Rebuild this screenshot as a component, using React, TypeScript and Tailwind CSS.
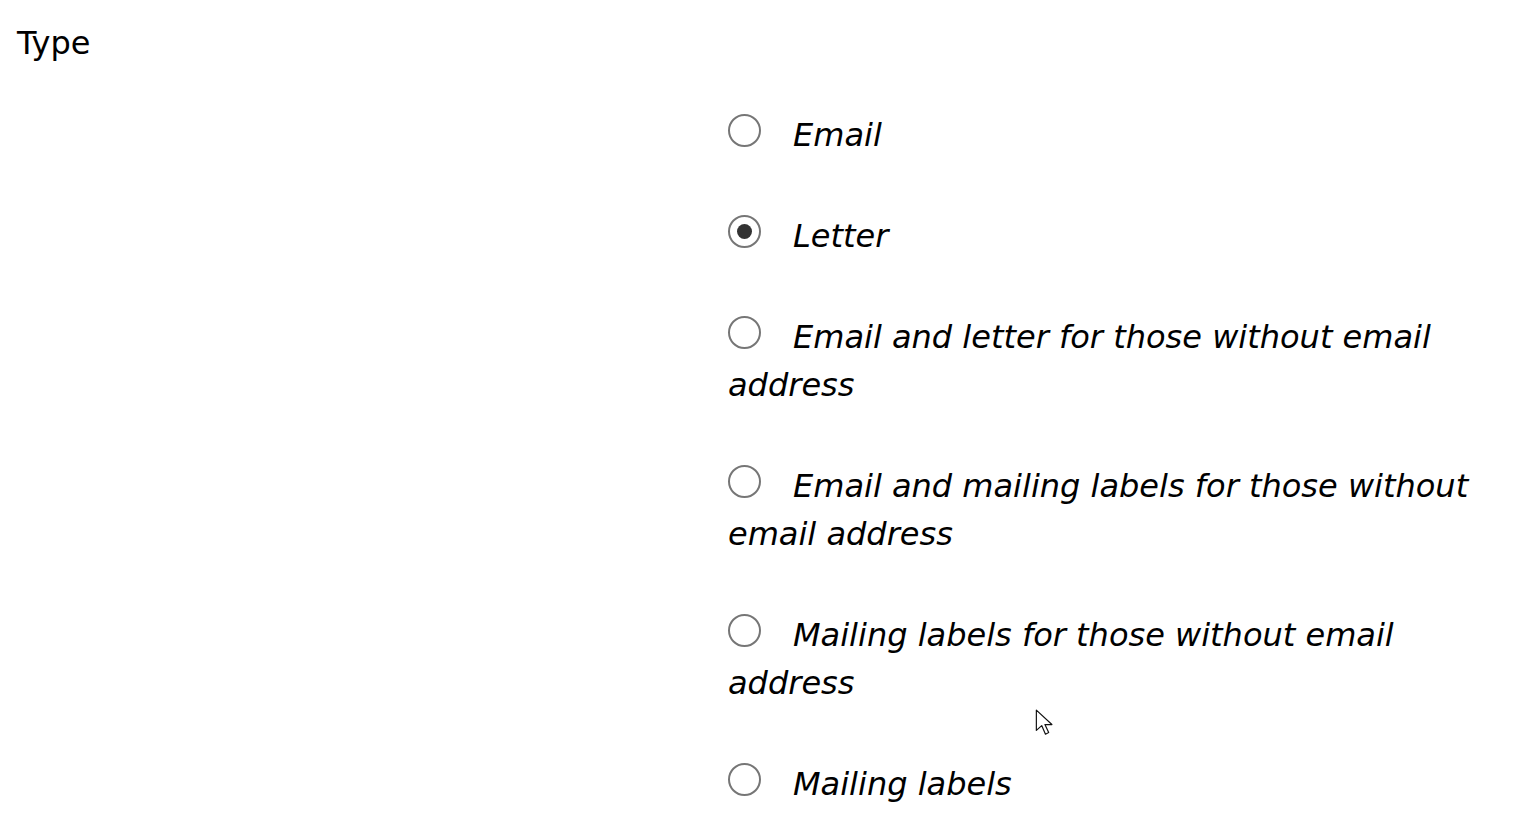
import { useState } from "react";

const options = [
  "Email",
  "Letter",
  "Email and letter for those without email address",
  "Email and mailing labels for those without email address",
  "Mailing labels for those without email address",
  "Mailing labels",
];

export default function App() {
  const [selected, setSelected] = useState(1);

  return (
    <div className="relative min-h-screen bg-white text-black font-['DejaVu_Sans',sans-serif]">
      <div className="flex">
        <div className="w-[728px] shrink-0 pl-[17px] pt-[22px] text-[32px] leading-[42px]">Type</div>
        <div className="w-[760px] pt-[111px]">
          {options.map((label, i) => (
            <label
              key={label}
              onClick={() => setSelected(i)}
              className="block cursor-pointer text-[32px] italic leading-[48px] mb-[53px]"
            >
              <span className="relative -top-[7px] inline-flex items-center justify-center w-[33px] h-[33px] rounded-full border-2 border-[#767676] bg-white align-middle mr-[32px]">
                {selected === i && <span className="w-[15px] h-[15px] rounded-full bg-[#333]" />}
              </span>
              {label}
            </label>
          ))}
        </div>
      </div>
      {/* mouse pointer */}
      <svg className="absolute left-[1035px] top-[709px]" width="22" height="30" viewBox="0 0 20 28">
        <path d="M1 1 L1 20 L6 15.5 L9.5 23.5 L12.5 22 L9 14.5 L15.5 14.5 Z" fill="white" stroke="#111" strokeWidth="1.1" strokeLinejoin="round" />
      </svg>
    </div>
  );
}
